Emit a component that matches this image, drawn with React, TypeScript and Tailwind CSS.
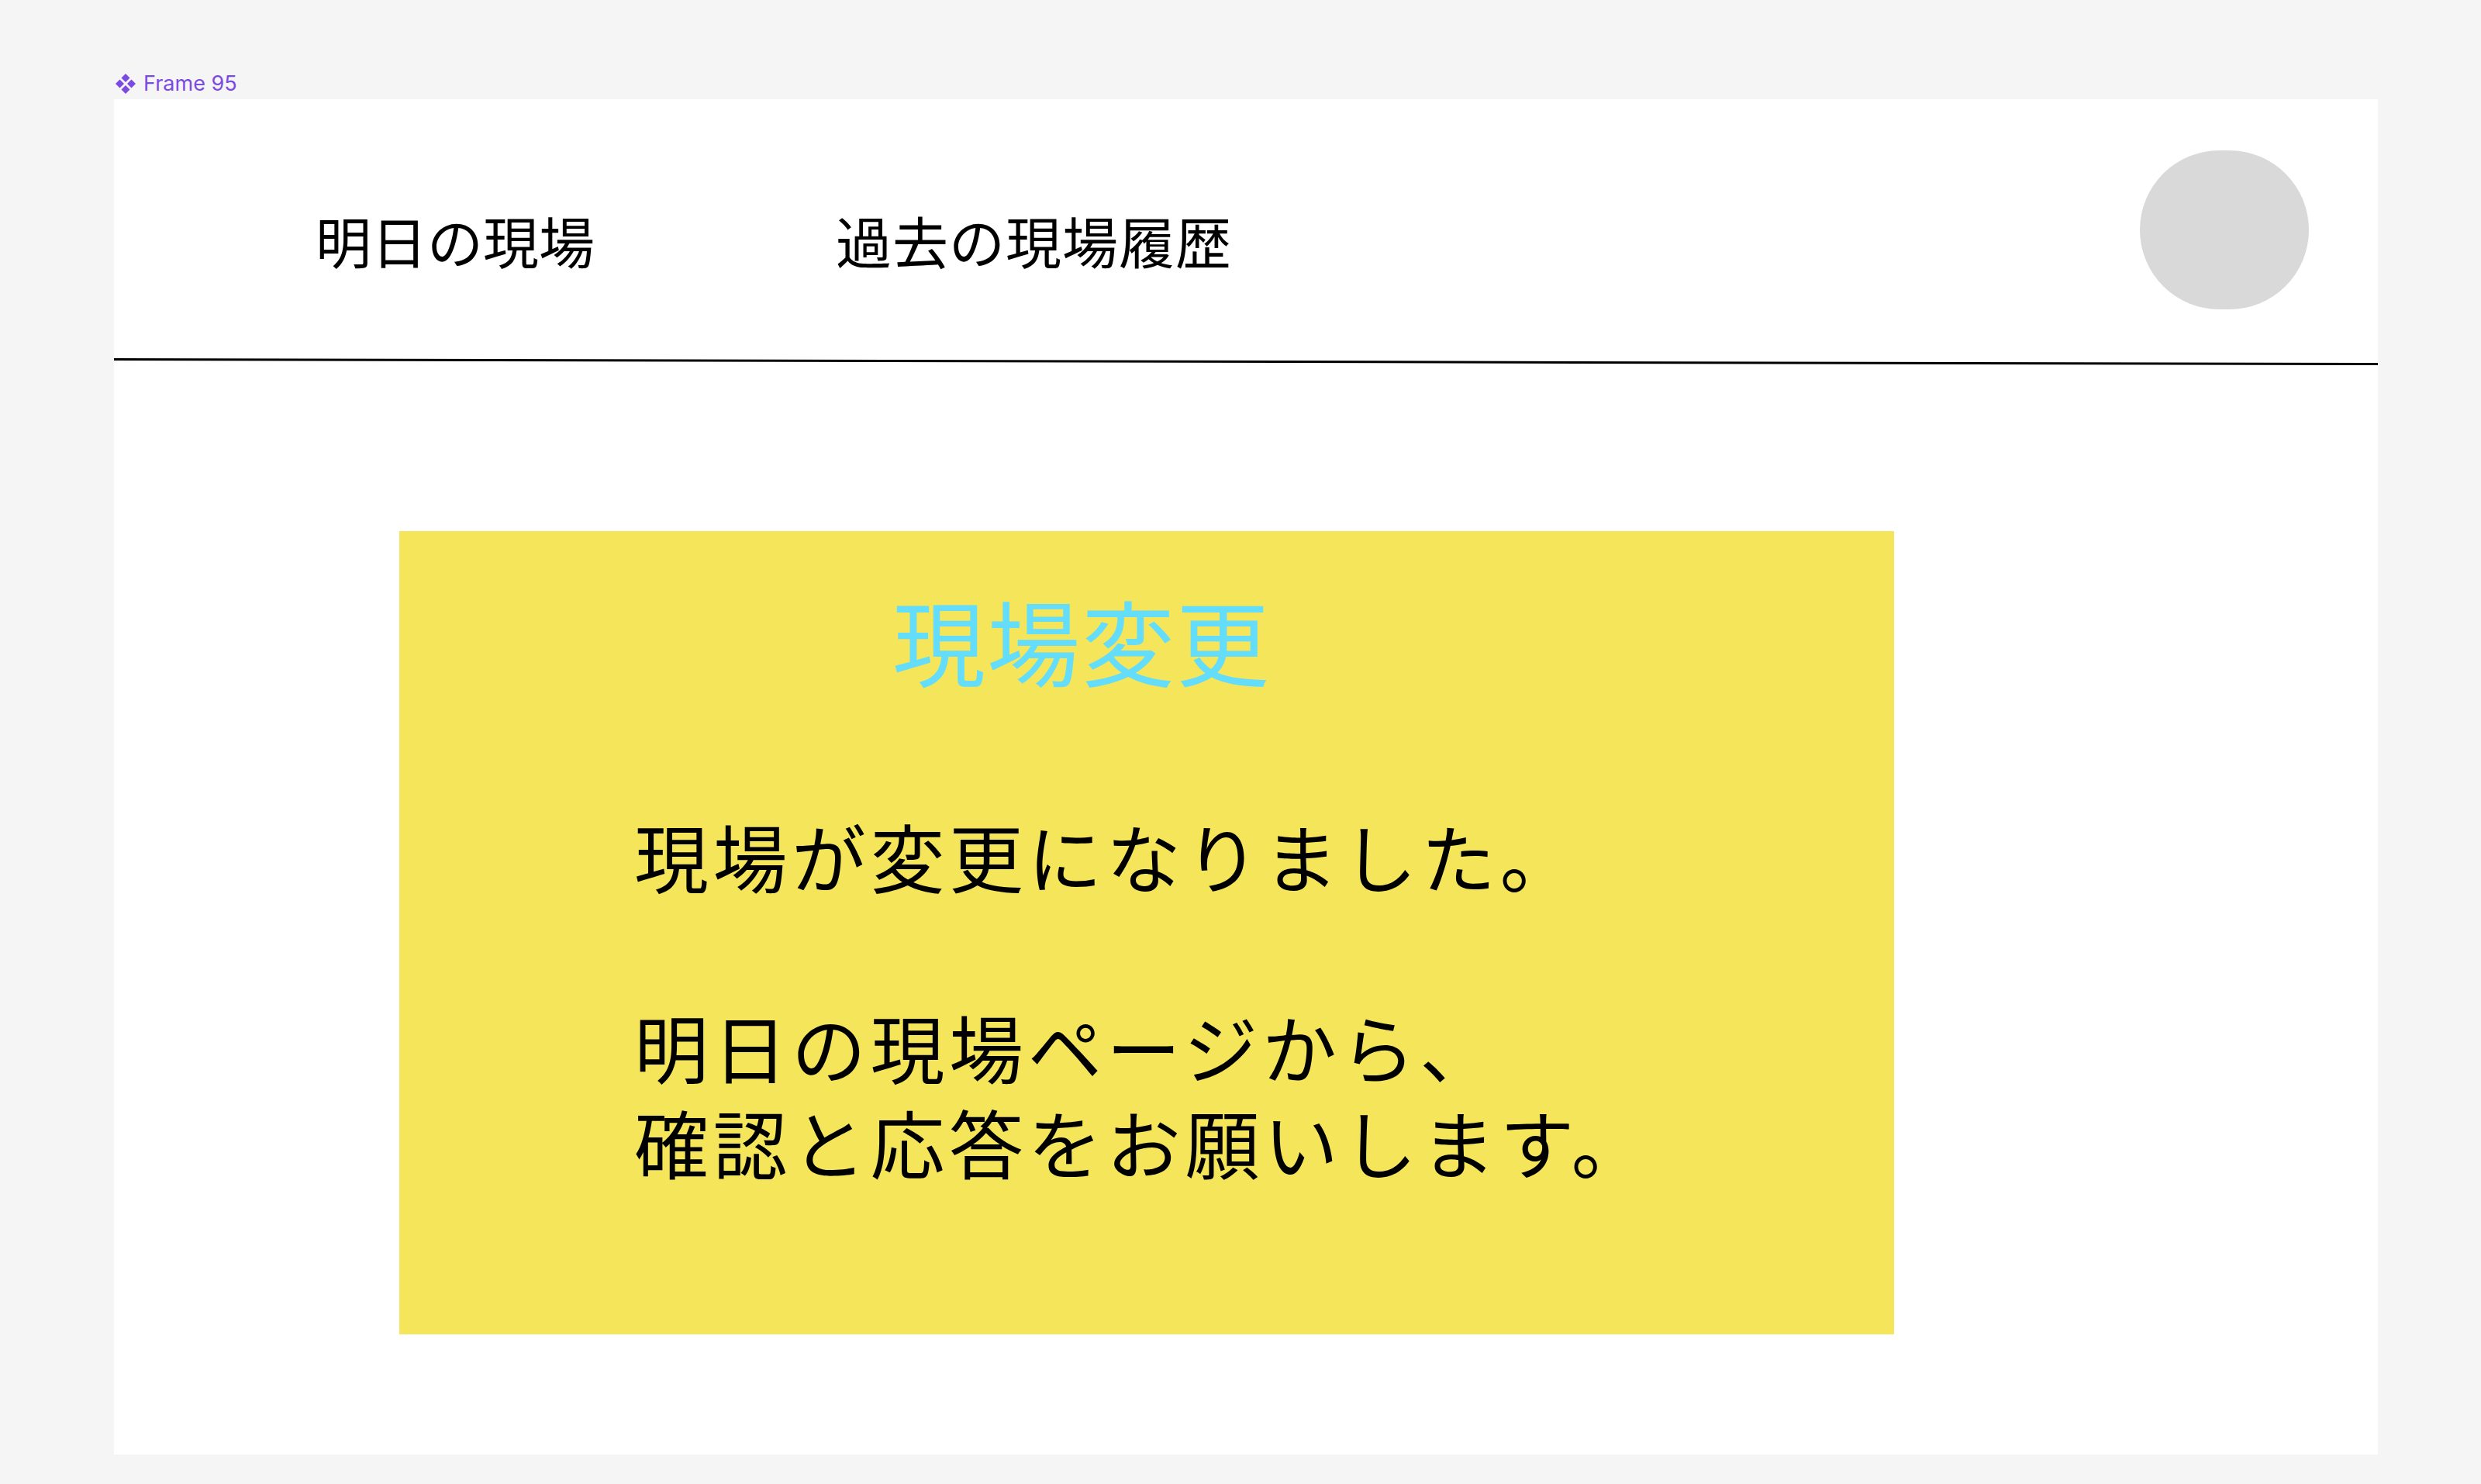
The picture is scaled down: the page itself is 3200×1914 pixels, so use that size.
function ComponentIcon() {
  return (
    <svg viewBox="0 0 28 28" className="h-[28px] w-[28px]" fill="#7b4ae2">
      <path d="M14 1 L19.5 6.5 L14 12 L8.5 6.5 Z" />
      <path d="M6.5 8.5 L12 14 L6.5 19.5 L1 14 Z" />
      <path d="M21.5 8.5 L27 14 L21.5 19.5 L16 14 Z" />
      <path d="M14 16 L19.5 21.5 L14 27 L8.5 21.5 Z" />
    </svg>
  )
}

export default function App() {
  const jp = { fontFamily: '"Noto Sans CJK JP", "Noto Sans", sans-serif' }
  return (
    <div className="min-h-[1914px] w-[3200px] bg-[#f5f5f5] pt-[94px] pl-[147px]">
      {/* Figma frame label */}
      <div className="flex h-[34px] items-start gap-[9px] pl-[1px]">
        <ComponentIcon />
        <span className="text-[27px] leading-[28px] text-[#7b4ae2]" style={{ fontFamily: "Inter, sans-serif" }}>
          Frame 95
        </span>
      </div>

      {/* Frame */}
      <div className="w-[2920px] h-[1748px] bg-white" style={jp}>
        {/* Header */}
        <div className="flex h-[337px] items-start">
          <div className="ml-[260px] mt-[145px] w-[671px] text-[72px] leading-none text-black">明日の現場</div>
          <div className="mt-[145px] text-[72px] leading-none tracking-[1px] text-black">過去の現場履歴</div>
          <div className="ml-auto mr-[89px] mt-[66px] h-[205px] w-[218px] rounded-full bg-[#d9d9d9]" />
        </div>
        <div className="h-[3px] w-full rotate-[0.12deg] bg-black" />

        {/* Notice */}
        <div className="ml-[368px] mt-[217px] h-[1036px] w-[1928px] bg-[#f5e55b]">
          <div className="pt-[80px] pl-[636px] text-[120px] leading-none tracking-[2px] text-[#64ddfa]">現場変更</div>
          <div className="mt-[156px] pl-[303px] text-[96px] leading-[123px] tracking-[5.5px] text-black">
            <p>現場が変更になりました。</p>
            <p className="mt-[123px]">明日の現場ページから、</p>
            <p>確認と応答をお願いします。</p>
          </div>
        </div>
      </div>
    </div>
  )
}
